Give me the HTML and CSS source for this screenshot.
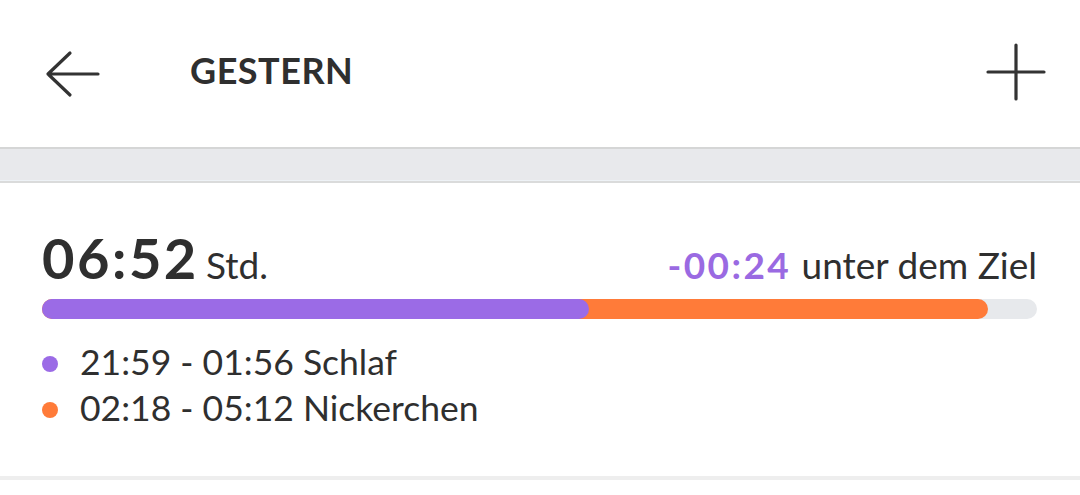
FILE: index.html
```html
<!DOCTYPE html>
<html lang="de">
<head>
<meta charset="utf-8">
<title>Gestern</title>
<link rel="stylesheet" href="styles.css">
</head>
<body>
<header class="topbar">
  <svg class="icon-back" width="60" height="50" viewBox="0 0 60 50" aria-label="Zurück">
    <path d="M4 25 H54 M26 4 L4 25 L26 46" fill="none" stroke="#333" stroke-width="3.2" stroke-linecap="round" stroke-linejoin="round"/>
  </svg>
  <h1 class="title">GESTERN</h1>
  <svg class="icon-plus" width="60" height="60" viewBox="0 0 60 60" aria-label="Hinzufügen">
    <path d="M30 3 V57 M2 30 H58" fill="none" stroke="#333" stroke-width="3.2" stroke-linecap="round"/>
  </svg>
</header>
<div class="band"></div>
<section class="card">
  <div class="summary">
    <div class="total"><span class="total-value">06:52</span> <span class="total-unit">Std.</span></div>
    <div class="goal"><span class="goal-diff">-00:24</span> unter dem Ziel</div>
  </div>
  <div class="bar">
    <div class="seg seg-nap" style="width:95.08%"></div>
    <div class="seg seg-sleep" style="width:54.97%"></div>
  </div>
  <ul class="legend">
    <li class="legend-item"><span class="dot dot-sleep"></span>21:59 - 01:56 Schlaf</li>
    <li class="legend-item"><span class="dot dot-nap"></span>02:18 - 05:12 Nickerchen</li>
  </ul>
</section>
</body>
</html>
```
FILE: styles.css
```css
* { box-sizing: border-box; }
html, body { margin: 0; padding: 0; background: #fff; }
body {
  width: 1080px;
  font-family: Lato, "Open Sans", sans-serif;
  color: #2f2f2f;
}
.topbar {
  height: 147px;
  display: flex;
  align-items: center;
  padding-left: 44px;
  padding-right: 34px;
  background: #fff;
}
.icon-back { display: block; }
.title {
  margin: 0 0 7px 86px;
  font-size: 36px;
  line-height: 40px;
  font-weight: 700;
  letter-spacing: 0.5px;
  color: #2f2f2f;
}
.icon-plus { display: block; margin-left: auto; margin-bottom: 3px; }
.band {
  height: 36px;
  background: #e8e9ec;
  border-top: 2px solid #d5d6d6;
  border-bottom: 2px solid #dadbdb;
  box-shadow: inset 0 -1px 0 #eef2f6;
}
.card {
  padding: 43px 43px 45px 42px;
  border-bottom: 4px solid #eeeeee;
}
.summary {
  display: flex;
  justify-content: space-between;
  align-items: baseline;
  line-height: 64px;
  height: 64px;
}
.total-value {
  font-size: 56px;
  font-weight: 700;
  letter-spacing: 2.5px;
}
.total-unit { font-size: 37px; margin-left: 3px; }
.goal { font-size: 37px; }
.goal-diff {
  font-weight: 700;
  color: #9a6ae2;
  letter-spacing: 2.4px;
  margin-right: 1px;
}
.bar {
  position: relative;
  margin-top: 9px;
  height: 20px;
  border-radius: 10px;
  background: #e7e9ec;
}
.seg {
  position: absolute;
  left: 0;
  top: 0;
  height: 20px;
  border-radius: 10px;
}
.seg-nap { background: #ff7b39; }
.seg-sleep { background: #9b6be6; }
.legend {
  list-style: none;
  margin: 20px 0 0;
  padding: 0;
}
.legend-item {
  display: flex;
  align-items: center;
  font-size: 35.5px;
  line-height: 46px;
  height: 46px;
}
.dot {
  width: 16px;
  height: 16px;
  border-radius: 50%;
  margin: 4px 22px 0 0;
  flex: none;
}
.dot-sleep { background: #9b6be6; }
.dot-nap { background: #ff7b39; }
```
